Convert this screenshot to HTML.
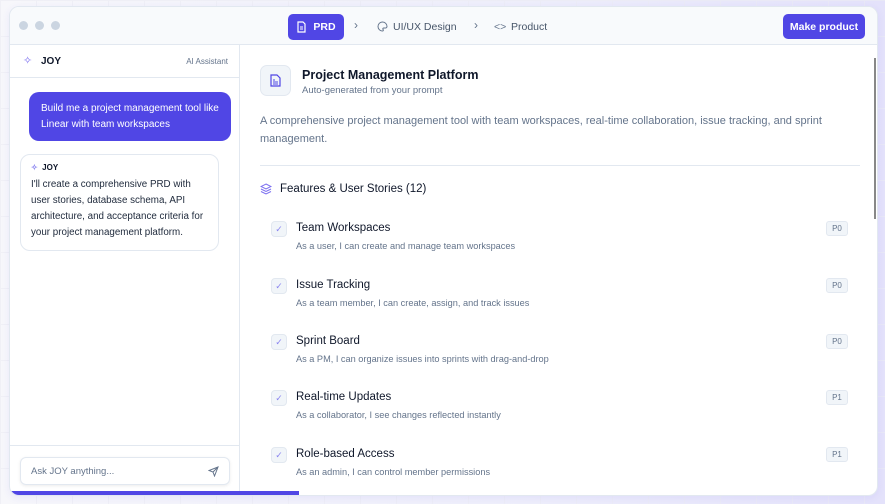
<!DOCTYPE html><html><head><style>
*{box-sizing:border-box;margin:0;padding:0}
body{width:885px;height:504px;overflow:hidden;font-family:"Liberation Sans",sans-serif;background:linear-gradient(90deg,#f7f7fb 0%,#eeeefb 60%,#e4e2fb 100%);position:relative;color:#0f172a}
.grid{position:absolute;inset:0;background-image:linear-gradient(#ececf4 1px,transparent 1px),linear-gradient(90deg,#ececf4 1px,transparent 1px);background-size:36px 36px;opacity:.6}
.win{position:absolute;left:9px;top:6px;width:869px;height:490px;background:#fff;border:1px solid #e2e8f0;border-radius:10px;overflow:hidden;box-shadow:0 2px 8px rgba(80,70,229,.08)}
.hdr{position:absolute;left:0;top:0;right:0;height:38px;background:#f8fafc;border-bottom:1px solid #e2e8f0}
.dot{position:absolute;top:14px;width:9px;height:9px;border-radius:50%;background:#cbd5e1}
.abs{position:absolute;white-space:nowrap}
.btn{position:absolute;background:#5046e5;color:#fff;border-radius:5px;font-size:10.5px;font-weight:bold;display:flex;align-items:center;justify-content:center}
.side{position:absolute;left:0;top:38px;width:230px;bottom:0;border-right:1px solid #e2e8f0}
.item .cb{position:absolute;left:11px;width:16px;height:16px;border:1px solid #e2e8f0;background:#f1f5f9;border-radius:4px;color:#8b85f0;font-size:9px;display:flex;align-items:center;justify-content:center}
.t{font-size:11.5px;color:#0f172a}
.s{font-size:9.2px;color:#64748b}
.badge{position:absolute;left:816px;width:22px;height:15px;border:1px solid #e2e8f0;background:#f1f5f9;border-radius:3px;font-size:8px;color:#64748b;display:flex;align-items:center;justify-content:center}
</style></head><body><div class="grid"></div>
<div class="win">
<div class="hdr">
<div class="dot" style="left:9px"></div><div class="dot" style="left:25px"></div><div class="dot" style="left:41px"></div>
<div class="btn" style="left:278px;top:7px;width:56px;height:26px"><svg width="11" height="12" viewBox="0 0 11 12" style="margin-right:6px"><path d="M2 1h5l2 2v8H2z" fill="none" stroke="#fff" stroke-width="1.2"/><path d="M4 6h3M4 8h3" stroke="#fff"/></svg>PRD</div>
<div class="abs" style="left:344px;top:11px;font-size:12px;color:#64748b">›</div>
<svg class="abs" style="left:367px;top:14px" width="11" height="11" viewBox="0 0 11 11"><path d="M5.5 1A4.5 4.5 0 1 0 5.5 10c1 0 1-1 .5-1.6s0-1.4.8-1.4H8.5A1.5 1.5 0 0 0 10 5.5 4.5 4.5 0 0 0 5.5 1z" fill="none" stroke="#64748b" stroke-width="1"/></svg>
<div class="abs" style="left:383px;top:14px;font-size:10.5px;color:#475569">UI/UX Design</div>
<div class="abs" style="left:464px;top:11px;font-size:12px;color:#64748b">›</div>
<div class="abs" style="left:484px;top:14px;font-size:10.5px;color:#64748b">&lt;&gt;</div>
<div class="abs" style="left:501px;top:14px;font-size:10.5px;color:#475569">Product</div>
<div class="btn" style="left:773px;top:7px;width:82px;height:25px">Make product</div>
</div>
<div class="side">
<div style="position:absolute;left:0;right:0;top:0;height:33px;border-bottom:1px solid #e2e8f0">
<div class="abs" style="left:13px;top:9px;font-size:11px;color:#7c6ff0">✧</div>
<div class="abs" style="left:31px;top:11px;font-size:10px;font-weight:bold">JOY</div>
<div class="abs" style="right:11px;top:12px;font-size:8px;color:#64748b">AI Assistant</div>
</div>
<div style="position:absolute;left:19px;top:47px;width:202px;height:49px;background:#5046e5;border-radius:10px;color:#fff;font-size:10px;line-height:16px;padding:9px 12px">Build me a project management tool like Linear with team workspaces</div>
<div style="position:absolute;left:10px;top:109px;width:199px;height:97px;border:1px solid #e2e8f0;border-radius:10px;padding:8px 10px">
<div style="font-size:8px;font-weight:bold"><span style="color:#8b85f0">✧</span>&nbsp; JOY</div>
<div style="font-size:9.8px;line-height:16px;margin-top:5px;color:#1e293b">I'll create a comprehensive PRD with user stories, database schema, API architecture, and acceptance criteria for your project management platform.</div>
</div>
<div style="position:absolute;left:0;right:0;top:400px;border-top:1px solid #e2e8f0"></div>
<div style="position:absolute;left:10px;top:412px;width:210px;height:28px;border:1px solid #e2e8f0;border-radius:6px;box-shadow:0 1px 3px rgba(0,0,0,.08);font-size:9.5px;color:#64748b;padding:8px 10px">Ask JOY anything...<svg style="position:absolute;right:10px;top:8px" width="11" height="11" viewBox="0 0 11 11"><path d="M10 1L1 4.5l4 1.5 1.5 4z M10 1L5 6" fill="none" stroke="#64748b" stroke-width="1"/></svg></div>
</div>
<div style="position:absolute;left:0;top:484px;width:289px;height:4px;background:#5046e5"></div>
<div style="position:absolute;left:864px;top:51px;width:2px;height:161px;background:#888"></div>
<div style="position:absolute;left:250px;top:58px;width:31px;height:31px;border:1px solid #e2e8f0;background:#f1f5f9;border-radius:7px;display:flex;align-items:center;justify-content:center"><svg width="11" height="13" viewBox="0 0 11 13"><path d="M1 1h6l3 3v8H1z" fill="none" stroke="#5046e5" stroke-width="1.2"/><path d="M3 6h2M3 8h5M3 10h5" stroke="#5046e5"/></svg></div>
<div class="abs" style="left:292px;top:61px;font-size:12.5px;font-weight:bold">Project Management Platform</div>
<div class="abs" style="left:292px;top:78px;font-size:9.5px;color:#64748b">Auto-generated from your prompt</div>
<div style="position:absolute;left:250px;top:105px;width:590px;font-size:11px;line-height:18px;color:#64748b">A comprehensive project management tool with team workspaces, real-time collaboration, issue tracking, and sprint management.</div>
<div style="position:absolute;left:250px;top:158px;width:600px;border-top:1px solid #e2e8f0"></div>
<svg class="abs" style="left:250px;top:176px" width="12" height="12" viewBox="0 0 12 12"><path d="M6 1L11 3.5 6 6 1 3.5z M1 6l5 2.5L11 6 M1 8.5L6 11l5-2.5" fill="none" stroke="#7c6ff0" stroke-width="1"/></svg>
<div class="abs" style="left:270px;top:176px;font-size:11.5px">Features &amp; User Stories (12)</div>
<div class="item">
<div class="cb" style="left:261px;top:214px">✓</div><div class="abs t" style="left:286px;top:215px">Team Workspaces</div><div class="abs s" style="left:286px;top:234px">As a user, I can create and manage team workspaces</div><div class="badge" style="top:214px">P0</div>
<div class="cb" style="left:261px;top:271px">✓</div><div class="abs t" style="left:286px;top:272px">Issue Tracking</div><div class="abs s" style="left:286px;top:291px">As a team member, I can create, assign, and track issues</div><div class="badge" style="top:271px">P0</div>
<div class="cb" style="left:261px;top:327px">✓</div><div class="abs t" style="left:286px;top:328px">Sprint Board</div><div class="abs s" style="left:286px;top:347px">As a PM, I can organize issues into sprints with drag-and-drop</div><div class="badge" style="top:327px">P0</div>
<div class="cb" style="left:261px;top:383px">✓</div><div class="abs t" style="left:286px;top:384px">Real-time Updates</div><div class="abs s" style="left:286px;top:403px">As a collaborator, I see changes reflected instantly</div><div class="badge" style="top:383px">P1</div>
<div class="cb" style="left:261px;top:440px">✓</div><div class="abs t" style="left:286px;top:441px">Role-based Access</div><div class="abs s" style="left:286px;top:460px">As an admin, I can control member permissions</div><div class="badge" style="top:440px">P1</div>
</div>
</div>
</body></html>
